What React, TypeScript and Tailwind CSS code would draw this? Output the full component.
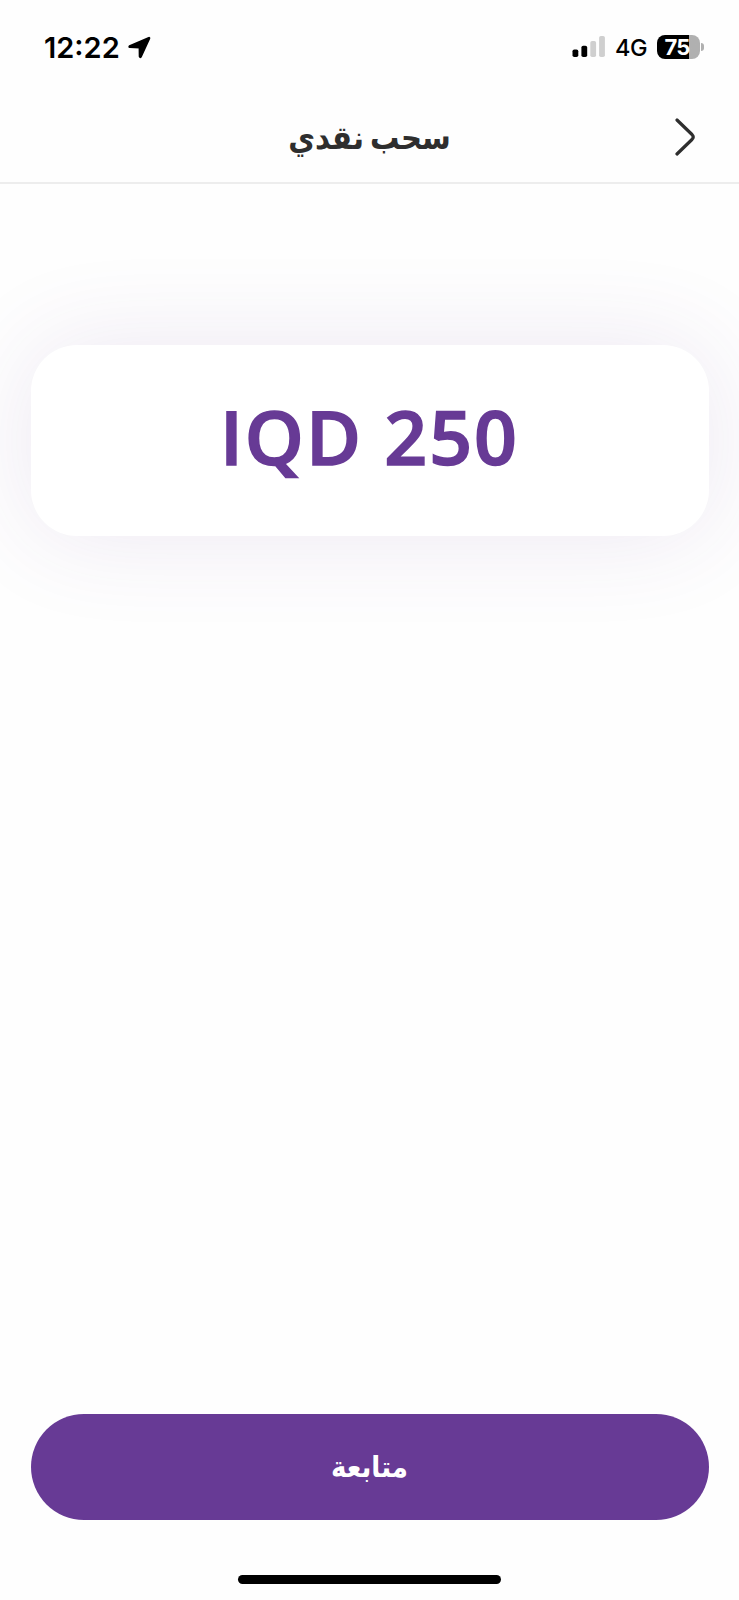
import React from 'react';

function StatusBar() {
    return (
        <div dir="ltr" className="h-[95px] flex items-start justify-between pl-[44px] pr-[35px] pt-[30px] text-black">
            <div className="h-[34px] flex items-center gap-[8px]">
                <span className="font-[Inter] text-[29px] leading-[34px] pt-[1px] font-semibold w-[76px]">12:22</span>
                <svg width="23" height="23" viewBox="0 0 23 23">
                    <path d="M20.8 1.7 1.5 10Q.7 11 1.7 11.3L11.4 11.6 11.5 20.5Q12.2 22 13 20.8L21.5 2.4Q21.7 1.4 20.8 1.7Z" stroke="#000" strokeWidth="1.6" strokeLinejoin="round" />
                </svg>
            </div>
            <div className="h-[34px] flex items-center">
                <svg width="33" height="22" viewBox="0 0 33 22">
                    <rect x="0.5" y="13.5" width="5.8" height="7.5" rx="1.8" />
                    <rect x="9.4" y="9.7" width="5.8" height="11.3" rx="1.8" />
                    <rect x="18.3" y="5" width="5.8" height="16" rx="1.8" fill="#cfcfcf" />
                    <rect x="27.1" y="0" width="5.8" height="21" rx="1.8" fill="#cfcfcf" />
                </svg>
                <span className="ml-[10px] w-[33px] font-[Inter] text-[23.5px] leading-[34px] font-medium tracking-[-0.4px] pt-[2px]">4G</span>
                <div className="ml-[9px] w-[43px] h-[24px] rounded-[8px] bg-linear-to-r from-black from-75% to-[#b0b0b0] to-75% text-white font-[Inter] font-bold text-[22px] leading-[25px] tracking-[-0.7px] text-center pr-[3px]">75</div>
                <span className="ml-[1px] w-[3px] h-[8px] rounded-r-full bg-[#b0b0b0]" />
            </div>
        </div>
    );
}

function Header() {
    return (
        <header className="h-[89px] grid grid-cols-[80px_1fr_80px] items-center border-b-2 border-[#ededed]">
            <span />
            <h1 dir="rtl" className="text-center text-[#2e2e2e] font-['DejaVu_Sans_Condensed','DejaVu_Sans',sans-serif] font-bold text-[32.5px] [word-spacing:-4px]">سحب نقدي</h1>
            <svg className="ml-[15px] mb-[3px]" width="22" height="40" viewBox="0 0 22 40" fill="none" stroke="#2e2e2e" strokeWidth="3.2">
                <path d="M3 3 18 17.5Q20.4 20 18 22.5L3 37" strokeLinecap="round" strokeLinejoin="round" />
            </svg>
        </header>
    );
}

export default function App() {
    return (
        <div className="w-[739px] h-[1600px] flex flex-col bg-[#fefefe] overflow-hidden">
            <StatusBar />
            <Header />
            <main className="flex-1 flex flex-col px-[30.5px] pt-[161px]">
                <div className="h-[191px] rounded-[46px] bg-white flex items-center justify-center shadow-[0_0_100px_rgba(103,58,149,0.11)]">
                    <span dir="ltr" className="text-[#673a95] font-['Open_Sans',sans-serif] font-semibold text-[75px] tracking-[2px] pb-[8px] [-webkit-text-stroke:1.6px_#673a95]">IQD 250</span>
                </div>
                <button className="mt-auto mb-[80px] h-[106px] rounded-full bg-[#673a95] text-white font-['DejaVu_Sans_Condensed','DejaVu_Sans',sans-serif] font-bold text-[29px] pt-[2px]">متابعة</button>
            </main>
            <div className="absolute left-[238px] top-[1575px] w-[263px] h-[9px] rounded-full bg-black" />
        </div>
    );
}
